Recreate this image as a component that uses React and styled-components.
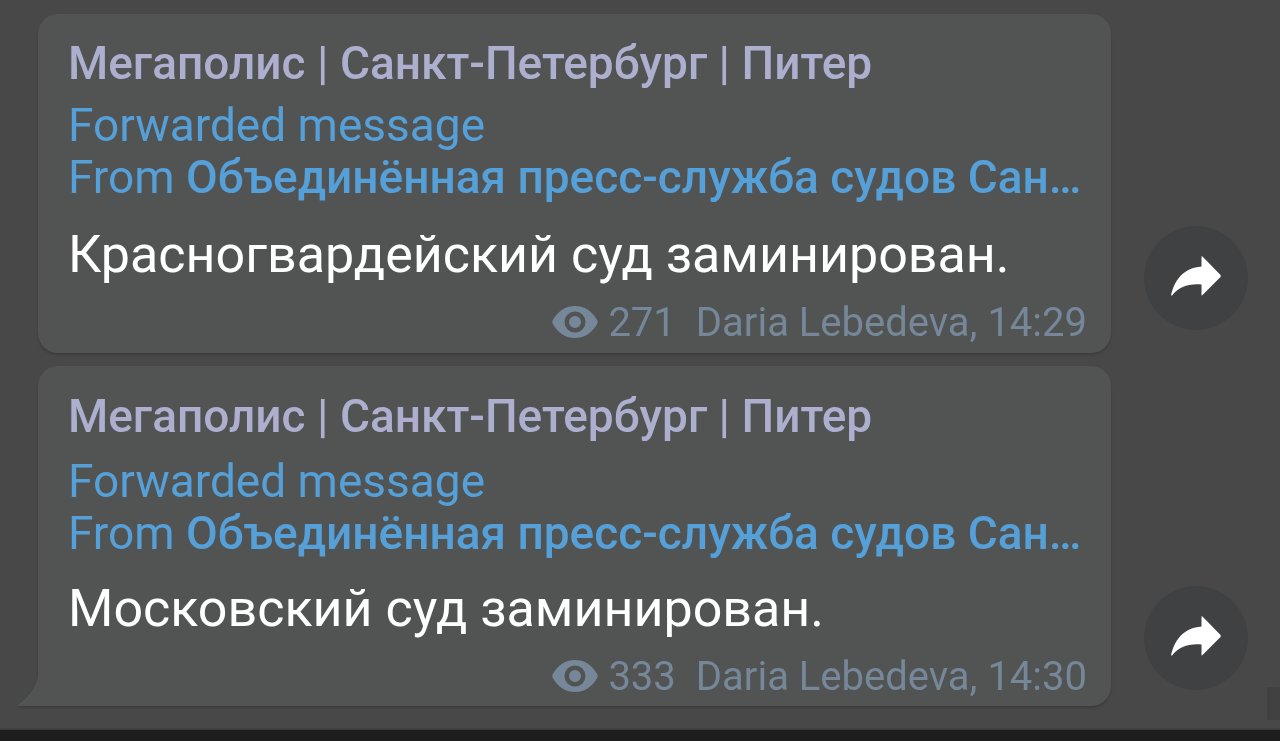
import React from "react";
import styled, { createGlobalStyle } from "styled-components";

const GlobalStyle = createGlobalStyle`
  *, *::before, *::after { box-sizing: border-box; }
  body {
    margin: 0;
    background: #484848;
    font-family: Roboto, "Liberation Sans", sans-serif;
  }
`;

const Page = styled.div`
  min-height: 100vh;
  display: flex;
  flex-direction: column;
  background: linear-gradient(#414141, #414141) right 0 bottom 21px / 13px 33px no-repeat #484848;
`;

const Chat = styled.main`
  flex: 1;
  display: flex;
  flex-direction: column;
  gap: 13px;
  padding: 14px 32px 24px 38px;
`;

const MessageRow = styled.article`
  display: flex;
  align-items: flex-end;
  gap: 33px;
`;

const Bubble = styled.div`
  position: relative;
  flex: 1;
  min-width: 0;
  padding: ${(p) => (p.$last ? "22px 24px 9px 30px" : "21px 24px 10px 30px")};
  border-radius: ${(p) => (p.$last ? "20px 20px 20px 0" : "20px")};
  background: #525453;
  filter: drop-shadow(0 2px 1px #3c3c3c);
`;

const Tail = styled.svg`
  position: absolute;
  left: -20px;
  bottom: 0;
  width: 21px;
  height: 30px;
  fill: #525453;
`;

const Channel = styled.h2`
  margin: 0;
  color: #aeaecf;
  font-size: 46px;
  font-weight: 500;
  line-height: 56px;
  white-space: nowrap;
`;

const Forward = styled.div`
  margin-top: ${(p) => (p.$last ? 11 : 8)}px;
  color: #55a0d8;
  font-size: 46px;
  line-height: 52px;
`;

const ForwardLine = styled.div`
  overflow: hidden;
  white-space: nowrap;
`;

const Source = styled.a`
  color: inherit;
  font-weight: 500;
  text-decoration: none;
`;

const Body = styled.p`
  margin: ${(p) => (p.$last ? 20 : 22)}px 0 18px;
  color: #ffffff;
  font-size: 52px;
  line-height: 60px;
`;

const Meta = styled.footer`
  display: flex;
  justify-content: flex-end;
  align-items: center;
  color: #758798;
  font-size: 40px;
  line-height: 40px;
  white-space: nowrap;
`;

const Eye = styled.svg`
  width: 46px;
  height: 34px;
  margin: 0 10px 2px 0;
`;

const Signature = styled.span`
  margin-left: 20px;
`;

const ShareButton = styled.button`
  flex: none;
  display: grid;
  place-items: center;
  width: 104px;
  height: 104px;
  margin: 0 0 ${(p) => (p.$last ? 16 : 23)}px;
  padding: 0 0 4px;
  border: 0;
  border-radius: 50%;
  background: #404142;
  cursor: pointer;
`;

const BottomBar = styled.div`
  height: 11px;
  background: #1e1e1e;
  box-shadow: 0 -1px 1px #3a3a3a;
`;

const messages = [
  { text: "Красногвардейский суд заминирован.", views: 271, time: "14:29" },
  { text: "Московский суд заминирован.", views: 333, time: "14:30" },
];

function Message({ text, views, time, last }) {
  return (
    <MessageRow>
      <Bubble $last={last}>
        {last && (
          <Tail viewBox="0 0 21 30" aria-hidden="true">
            <path d="M21 0H20C19 9 11 21 1 28Q-1 30 2 30H21Z" />
          </Tail>
        )}
        <Channel>Мегаполис | Санкт-Петербург | Питер</Channel>
        <Forward $last={last}>
          <ForwardLine>Forwarded message</ForwardLine>
          <ForwardLine>
            From <Source href="#source">Объединённая пресс-служба судов Сан…</Source>
          </ForwardLine>
        </Forward>
        <Body $last={last}>{text}</Body>
        <Meta>
          <Eye viewBox="0 0 46 34" aria-hidden="true">
            <path
              fill="currentColor"
              fillRule="evenodd"
              d="M23 1C13 1 5 7 0.600 15.500Q0 17 0.600 18.500C5 27 13 33 23 33S41 27 45.400 18.500Q46 17 45.400 15.500C41 7 33 1 23 1ZM23 6.500A10.500 10.500 0 1 1 23 27.500A10.500 10.500 0 1 1 23 6.500ZM23 11A6 6 0 1 0 23 23A6 6 0 1 0 23 11Z"
            />
          </Eye>
          <span>{views}</span>
          <Signature>Daria Lebedeva, {time}</Signature>
        </Meta>
      </Bubble>
      <ShareButton $last={last} type="button" aria-label="Share">
        <svg width="50" height="40" viewBox="0 0 50 40" aria-hidden="true">
          <path
            fill="#ffffff"
            d="M30.500 0.500Q31 0 31.500 0.500L49.500 19Q50 20 49.500 21L31.500 39Q30.500 40 30.500 38.500V28.500C17 27.500 8 31 1 39.500Q0 40 0.200 38.500C4 23 13 12 30.500 10.500Z"
          />
        </svg>
      </ShareButton>
    </MessageRow>
  );
}

export default function App() {
  return (
    <>
      <GlobalStyle />
      <Page>
        <Chat>
          {messages.map((m, i) => (
            <Message key={m.time} {...m} last={i === messages.length - 1} />
          ))}
        </Chat>
        <BottomBar />
      </Page>
    </>
  );
}
